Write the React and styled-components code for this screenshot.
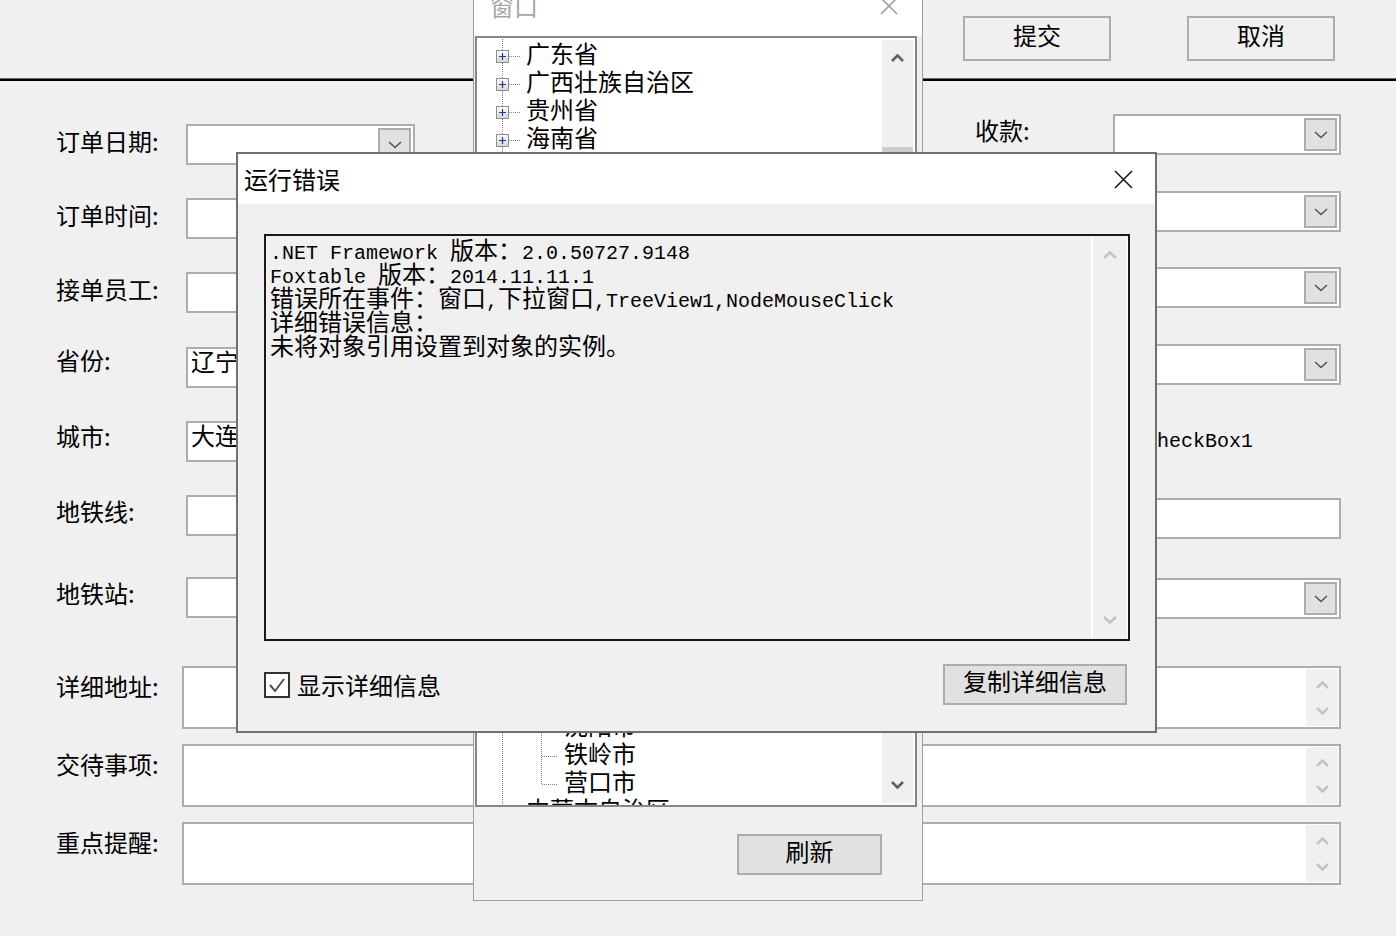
import React from "react";
import styled, { createGlobalStyle } from "styled-components";

const CJK = `"Noto Sans CJK SC", "Noto Sans", sans-serif`;
const MONO = `"Liberation Mono", "DejaVu Sans Mono", monospace`;

const GlobalStyle = createGlobalStyle`
  html, body { margin: 0; padding: 0; background: #f0f0f0; }
  body { overflow: hidden; }
  *, *::before, *::after { box-sizing: border-box; }
`;

const Desktop = styled.div`
  position: relative;
  width: 1396px;
  height: 936px;
  overflow: hidden;
  background: #f0f0f0;
  color: #000;
  font-family: ${CJK};
  font-size: 24px;
  line-height: 28px;
`;

/* ---------- main form ---------- */
const Form = styled.div`
  display: flex;
  flex-direction: column;
`;

const Header = styled.div`
  height: 78px;
  display: flex;
  justify-content: flex-end;
  align-items: flex-start;
  gap: 76px;
  padding: 16px 61px 0 0;
`;

const Button = styled.button`
  width: ${({ $w }) => $w}px;
  height: ${({ $h }) => $h || 41}px;
  flex: none;
  padding: 0 0 8px;
  display: flex;
  align-items: center;
  justify-content: center;
  background: ${({ $raised }) => ($raised ? "#e1e1e1" : "#f0f0f0")};
  border: 2px solid #adadad;
  color: #000;
  font-family: ${CJK};
  font-size: 24px;
  line-height: 28px;
`;

const Rule = styled.div`
  height: 3px;
  border-top: 1px solid #6a6a6a;
  background: #000;
`;

const Columns = styled.div`
  display: flex;
  align-items: flex-start;
  padding-left: 56px;
`;

const Column = styled.div`
  display: flex;
  flex-direction: column;
  flex: none;
  width: ${({ $w }) => $w}px;
  margin-left: ${({ $ml }) => $ml || 0}px;
  padding-top: ${({ $pt }) => $pt}px;
`;

const Field = styled.div`
  display: flex;
  align-items: center;
  height: 41px;
  margin-top: ${({ $mt }) => $mt || 0}px;
`;

const Label = styled.div`
  flex: none;
  align-self: flex-start;
  width: ${({ $w }) => $w}px;
  margin-top: ${({ $dy }) => $dy || 0}px;
  white-space: nowrap;
`;

const Box = styled.div`
  flex: 1;
  align-self: stretch;
  display: flex;
  align-items: ${({ $text }) => ($text ? "flex-start" : "center")};
  justify-content: space-between;
  padding: 0 2px 0 3px;
  background: #fff;
  border: 2px solid #adadad;
  line-height: ${({ $text }) => ($text ? "23px" : "28px")};
  white-space: nowrap;
`;

const DropButton = styled.span`
  width: 33px;
  height: 33px;
  flex: none;
  display: flex;
  align-items: center;
  justify-content: center;
  background: #e1e1e1;
  border: 2px solid #adadad;
`;

const CheckRow = styled.div`
  display: flex;
  align-items: center;
  gap: 6px;
  font-family: ${MONO};
  font-size: 20px;
`;

const CheckBox = styled.span`
  width: 26px;
  height: 26px;
  flex: none;
  display: flex;
  align-items: center;
  justify-content: center;
  background: #fff;
  border: 2px solid #333;
`;

const MemoArea = styled.div`
  display: flex;
  flex-direction: column;
  gap: 15px;
  padding: 47px 0 0 56px;
`;

const MemoRow = styled.div`
  display: flex;
  align-items: flex-start;
`;

const Memo = styled.div`
  width: 1159px;
  height: 63px;
  flex: none;
  display: flex;
  justify-content: flex-end;
  padding: 1px 1px 1px 0;
  background: #fff;
  border: 2px solid #adadad;
`;

const MemoScroll = styled.div`
  width: 32px;
  display: flex;
  flex-direction: column;
  align-items: center;
  justify-content: center;
  gap: 18px;
  background: #f0f0f0;
`;

/* ---------- windows ---------- */
const Window = styled.div`
  position: absolute;
  left: ${({ $x }) => $x}px;
  top: ${({ $y }) => $y}px;
  width: ${({ $w }) => $w}px;
  height: ${({ $h }) => $h}px;
  display: flex;
  flex-direction: column;
  background: #f0f0f0;
  border: ${({ $active }) => ($active ? "2px solid #707070" : "1px solid #a0a0a0")};
`;

const TitleBar = styled.div`
  flex: none;
  height: ${({ $h }) => $h}px;
  display: flex;
  align-items: center;
  justify-content: space-between;
  padding: ${({ $pad }) => $pad};
  background: #fff;
  color: ${({ $active }) => ($active ? "#000" : "#a6a6a6")};
`;

const Tree = styled.div`
  flex: none;
  height: 771px;
  margin: 0 5px 0 1px;
  display: flex;
  background: #fff;
  border: 2px solid #828790;
  overflow: hidden;
`;

const TreeList = styled.div`
  flex: 1;
  padding-top: 1px;
  overflow: hidden;
`;

const dots = (dir) =>
  `repeating-linear-gradient(${dir}, #808080 0 1px, transparent 1px 2px)`;

const TreeRow = styled.div`
  height: 28px;
  display: flex;
  align-items: center;
  white-space: nowrap;
  padding-left: ${({ $child }) => ($child ? 87 : 19)}px;
  background: ${({ $child, $last }) =>
    $child
      ? `${dots("to bottom")} 25px 0 / 1px 100% no-repeat,
         ${dots("to bottom")} 64px 0 / 1px ${$last ? "18px" : "100%"} no-repeat,
         ${dots("to right")} 65px 17px / 16px 1px no-repeat`
      : `${dots("to bottom")} 25px 0 / 1px 100% no-repeat,
         ${dots("to right")} 32px 17px / 12px 1px no-repeat`};
`;

const Expander = styled.span`
  width: 13px;
  height: 13px;
  flex: none;
  align-self: flex-start;
  margin: 11px 17px 0 0;
  display: flex;
  align-items: center;
  justify-content: center;
  border: 1px solid #8e8f8f;
  background: linear-gradient(#ffffff, #d6d6d6);
`;

const ScrollBar = styled.div`
  flex: none;
  width: ${({ $w }) => $w}px;
  margin: ${({ $m }) => $m};
  display: flex;
  flex-direction: column;
  background: #f0f0f0;
  border-left: ${({ $edge }) => ($edge ? "2px solid #fff" : "none")};
  border-right: ${({ $edge }) => ($edge ? "1px solid #fff" : "none")};
`;

const ScrollArrow = styled.div`
  height: 36px;
  flex: none;
  display: flex;
  align-items: center;
  justify-content: center;
`;

const ScrollTrack = styled.div`
  flex: 1;
  padding-top: ${({ $top }) => $top || 0}px;
  overflow: hidden;
`;

const Thumb = styled.div`
  height: ${({ $h }) => $h}px;
  background: #cdcdcd;
`;

const WindowFooter = styled.div`
  flex: 1;
  display: flex;
  justify-content: flex-end;
  align-items: flex-start;
  padding: 27px 40px 0 0;
`;

const DialogBody = styled.div`
  flex: 1;
  display: flex;
  flex-direction: column;
  padding: 30px 25px 0 26px;
`;

const ErrorBox = styled.div`
  flex: none;
  height: 407px;
  display: flex;
  background: #f0f0f0;
  border: 2px solid #1a1a1a;
`;

const ErrorText = styled.div`
  flex: 1;
  padding: 1px 0 0 4px;
  font-size: 24px;
  line-height: 24px;
`;

const ErrorLine = styled.div`
  height: 24px;
  white-space: pre;
`;

const Latin = styled.span`
  font-family: ${MONO};
  font-size: 20px;
`;

const DialogFooter = styled.div`
  flex: none;
  height: 41px;
  margin-top: 23px;
  display: flex;
  align-items: center;
  justify-content: space-between;
  padding-right: 3px;
`;

const CheckLabel = styled.label`
  display: flex;
  align-items: center;
  gap: 7px;
`;

/* ---------- drawings ---------- */
const Chevron = ({ up, color, w = 14, h = 8, sw = 1.6 }) => (
  <svg width={w} height={h} viewBox={`0 0 ${w} ${h}`}>
    <polyline
      points={
        up
          ? `1,${h - 1} ${w / 2},1.5 ${w - 1},${h - 1}`
          : `1,1 ${w / 2},${h - 1.5} ${w - 1},1`
      }
      fill="none"
      stroke={color}
      strokeWidth={sw}
    />
  </svg>
);

const Close = ({ size, color }) => (
  <svg width={size} height={size} viewBox={`0 0 ${size} ${size}`}>
    <path
      d={`M1 1L${size - 1} ${size - 1}M${size - 1} 1L1 ${size - 1}`}
      stroke={color}
      strokeWidth="1.5"
    />
  </svg>
);

const Plus = () => (
  <svg width="9" height="9" viewBox="0 0 9 9">
    <path d="M1 4.5H8M4.5 1V8" stroke="#1c3c8c" strokeWidth="1.2" />
  </svg>
);

const Tick = () => (
  <svg width="20" height="20" viewBox="0 0 20 20">
    <polyline points="3,10 8,16 17,4" fill="none" stroke="#4f4f4f" strokeWidth="2" />
  </svg>
);

const Combo = ({ children }) => (
  <Box>
    <span>{children}</span>
    <DropButton>
      <Chevron color="#555" />
    </DropButton>
  </Box>
);

/* ---------- data ---------- */
const leftFields = [
  { label: "订单日期:", combo: true, mt: 0, dy: 3 },
  { label: "订单时间:", mt: 33, dy: 3 },
  { label: "接单员工:", mt: 33, dy: 3 },
  { label: "省份:", value: "辽宁", mt: 34, dy: -1 },
  { label: "城市:", value: "大连", mt: 33, dy: 1 },
  { label: "地铁线:", mt: 33, dy: 2 },
  { label: "地铁站:", mt: 41, dy: 2 },
];

const rightFields = [
  { label: "收款:", kind: "combo", mt: 0, dy: 2 },
  { label: "", kind: "combo", mt: 36 },
  { label: "", kind: "combo", mt: 35 },
  { label: "", kind: "combo", mt: 36 },
  { label: "", kind: "check", mt: 36 },
  { label: "", kind: "text", mt: 36 },
  { label: "", kind: "combo", mt: 39 },
];

const memos = ["详细地址:", "交待事项:", "重点提醒:"];

const provincesBefore = [
  "广东省", "广西壮族自治区", "贵州省", "海南省", "河北省", "河南省",
  "黑龙江省", "湖北省", "湖南省", "吉林省", "江苏省", "江西省", "辽宁省",
];
const liaoningCities = [
  "鞍山市", "本溪市", "朝阳市", "大连市", "丹东市", "抚顺市", "阜新市",
  "葫芦岛市", "锦州市", "辽阳市", "盘锦市", "沈阳市", "铁岭市", "营口市",
];
const provincesAfter = ["内蒙古自治区", "宁夏回族自治区", "青海省"];

const errorLines = [
  ".NET Framework 版本：2.0.50727.9148",
  "Foxtable 版本：2014.11.11.1",
  "错误所在事件：窗口,下拉窗口,TreeView1,NodeMouseClick",
  "详细错误信息：",
  "未将对象引用设置到对象的实例。",
];

const HAN = /[\u3000-\u303f\u4e00-\u9fff\uff00-\uffef]/;
const splitRuns = (s) =>
  s.match(/[\u3000-\u303f\u4e00-\u9fff\uff00-\uffef]+|[^\u3000-\u303f\u4e00-\u9fff\uff00-\uffef]+/g);

const ProvinceRow = ({ name }) => (
  <TreeRow>
    <Expander>
      <Plus />
    </Expander>
    {name}
  </TreeRow>
);

const App = () => {
  return (
    <Desktop>
      <GlobalStyle />
      <Form>
        <Header>
          <Button $w={148} $h={45}>提交</Button>
          <Button $w={148} $h={45}>取消</Button>
        </Header>
        <Rule />
        <Columns>
          <Column $w={359} $pt={43}>
            {leftFields.map((f) => (
              <Field key={f.label} $mt={f.mt}>
                <Label $w={130} $dy={f.dy}>{f.label}</Label>
                {f.combo ? <Combo /> : <Box $text>{f.value}</Box>}
              </Field>
            ))}
          </Column>
          <Column $w={366} $ml={560} $pt={33}>
            {rightFields.map((f, i) => (
              <Field key={i} $mt={f.mt}>
                <Label $w={138} $dy={f.dy}>{f.label}</Label>
                {f.kind === "combo" && <Combo />}
                {f.kind === "text" && <Box $text />}
                {f.kind === "check" && (
                  <CheckRow>
                    <CheckBox />
                    CheckBox1
                  </CheckRow>
                )}
              </Field>
            ))}
          </Column>
        </Columns>
        <MemoArea>
          {memos.map((m) => (
            <MemoRow key={m}>
              <Label $w={126} $dy={6}>{m}</Label>
              <Memo>
                <MemoScroll>
                  <Chevron up color="#c4c4c4" w={13} h={8} sw={2.6} />
                  <Chevron color="#c4c4c4" w={13} h={8} sw={2.6} />
                </MemoScroll>
              </Memo>
            </MemoRow>
          ))}
        </MemoArea>
      </Form>

      <Window $x={473} $y={-20} $w={450} $h={921}>
        <TitleBar $h={55} $pad="0 24px 6px 16px">
          <span>窗口</span>
          <Close size={18} color="#9a9a9a" />
        </TitleBar>
        <Tree>
          <TreeList>
            {provincesBefore.map((p) => (
              <ProvinceRow key={p} name={p} />
            ))}
            {liaoningCities.map((c, i) => (
              <TreeRow key={c} $child $last={i === liaoningCities.length - 1}>
                {c}
              </TreeRow>
            ))}
            {provincesAfter.map((p) => (
              <ProvinceRow key={p} name={p} />
            ))}
          </TreeList>
          <ScrollBar $w={31} $m="2px 2px 2px 0">
            <ScrollArrow>
              <Chevron up color="#606060" w={13} h={8} sw={2.6} />
            </ScrollArrow>
            <ScrollTrack $top={71}>
              <Thumb $h={320} />
            </ScrollTrack>
            <ScrollArrow>
              <Chevron color="#606060" w={13} h={8} sw={2.6} />
            </ScrollArrow>
          </ScrollBar>
        </Tree>
        <WindowFooter>
          <Button $w={145} $raised>刷新</Button>
        </WindowFooter>
      </Window>

      <Window $x={236} $y={152} $w={921} $h={581} $active>
        <TitleBar $h={50} $pad="0 22px 0 6px" $active>
          <span>运行错误</span>
          <Close size={19} color="#111" />
        </TitleBar>
        <DialogBody>
          <ErrorBox>
            <ErrorText>
              {errorLines.map((line, i) => (
                <ErrorLine key={i}>
                  {splitRuns(line).map((run, j) =>
                    HAN.test(run) ? <span key={j}>{run}</span> : <Latin key={j}>{run}</Latin>
                  )}
                </ErrorLine>
              ))}
            </ErrorText>
            <ScrollBar $w={37} $m="1px 0" $edge>
              <ScrollArrow>
                <Chevron up color="#c2c2c2" w={14} h={8} sw={2.6} />
              </ScrollArrow>
              <ScrollTrack />
              <ScrollArrow>
                <Chevron color="#c2c2c2" w={14} h={8} sw={2.6} />
              </ScrollArrow>
            </ScrollBar>
          </ErrorBox>
          <DialogFooter>
            <CheckLabel>
              <CheckBox>
                <Tick />
              </CheckBox>
              显示详细信息
            </CheckLabel>
            <Button $w={184} $raised>复制详细信息</Button>
          </DialogFooter>
        </DialogBody>
      </Window>
    </Desktop>
  );
};

export default App;
